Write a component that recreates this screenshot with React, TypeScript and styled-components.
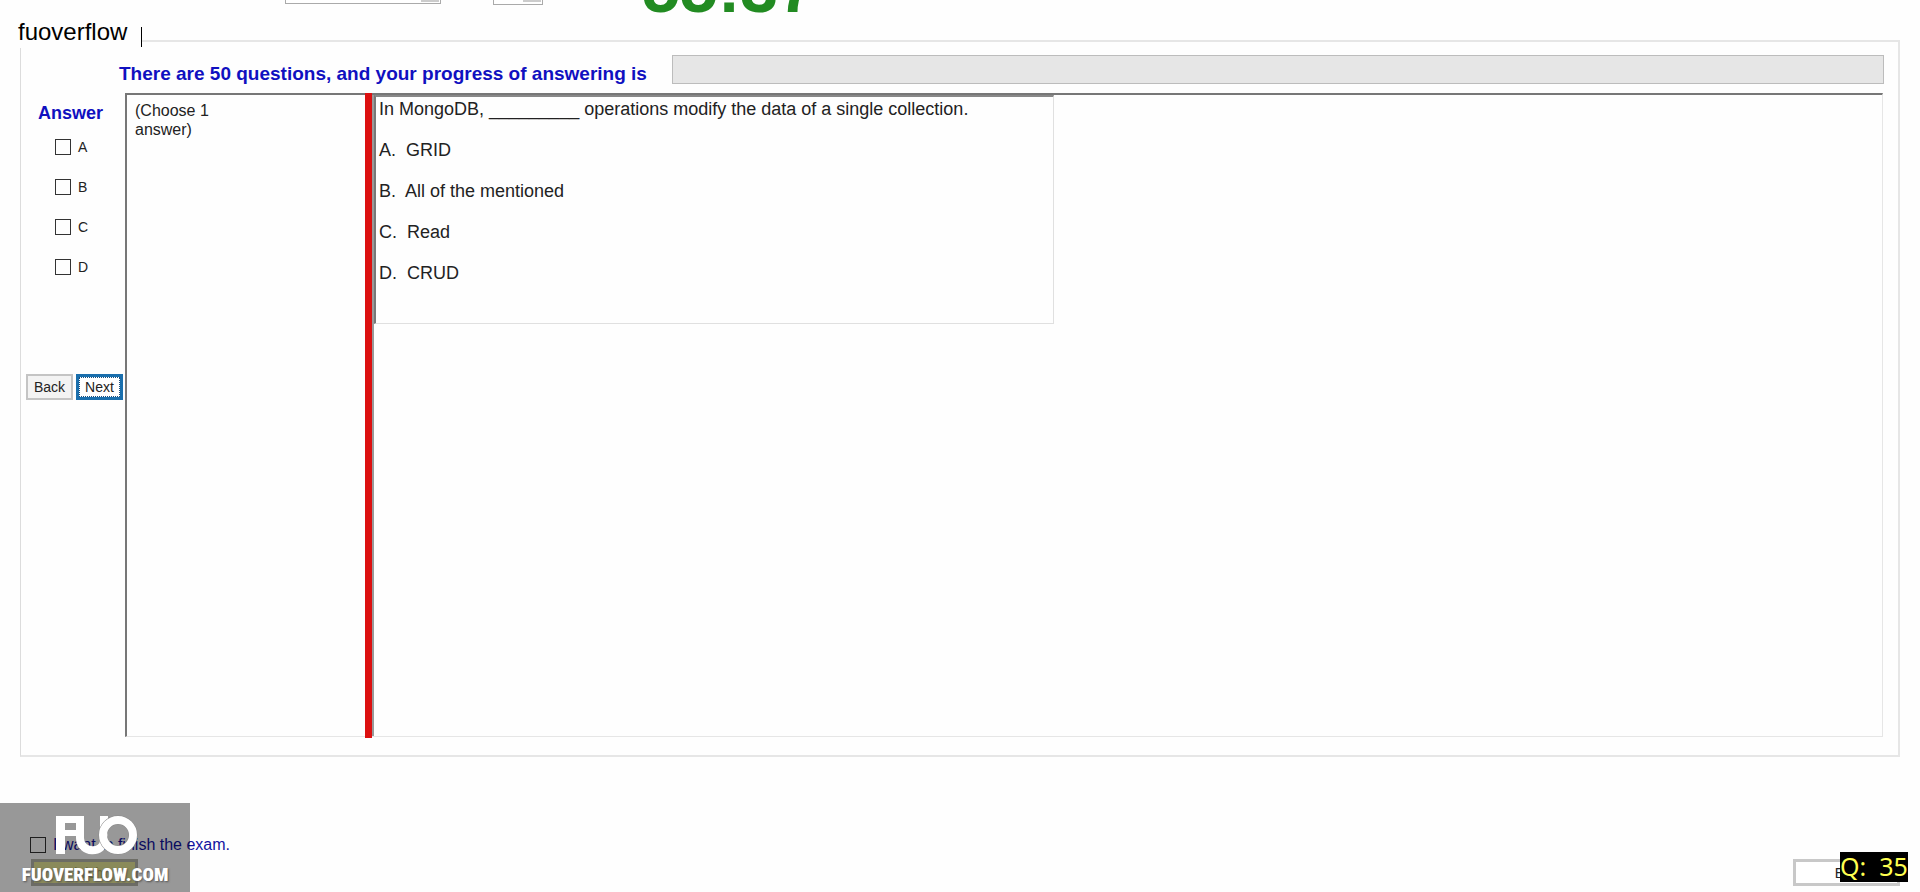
import React from 'react';
import styled, { createGlobalStyle } from 'styled-components';

const Global = createGlobalStyle`
  * { box-sizing: border-box; }
  body { margin: 0; background: #fefefe; color: #222; font-family: "Liberation Sans", Arial, sans-serif; }
  #root { min-height: 100vh; display: flex; }
`;

const Page = styled.div`
  flex: 1;
  min-width: 0;
  min-height: 100vh;
  position: relative;
  display: flex;
  flex-direction: column;
  overflow: hidden;
`;

const TopBar = styled.header`
  height: 40px;
  display: flex;
  align-items: flex-start;
  padding-left: 285px;
`;

const TopSelect = styled.select<{ $w: number; $h: number }>`
  width: ${p => p.$w}px;
  height: ${p => p.$h}px;
  flex: none;
  appearance: none;
  padding: 0;
  border: 1px solid #aaa;
  border-top: 0;
  border-radius: 0;
  background: linear-gradient(#ccc, #ccc) right 1px top 0 / 18px 2px no-repeat #fff;
  & + & { margin-left: 52px; }
`;

const Timer = styled.time`
  margin-left: 99px;
  height: 10px;
  display: flex;
  align-items: flex-end;
  font-size: 68px;
  line-height: 44px;
  font-weight: bold;
  color: #228b22;
`;

const Tag = styled.div`
  position: absolute;
  left: 10px;
  top: 16px;
  width: 132px;
  height: 32px;
  padding-left: 8px;
  background: #fefefe;
  color: #000;
  font-size: 24px;
  line-height: 32px;
  &::after { content: ""; position: absolute; right: 0; top: 11px; height: 20px; border-right: 1px solid #000; }
`;

const Panel = styled.main`
  flex: 1;
  margin: 0 20px;
  border: 2px solid #e6e6e6;
  border-left: 1px solid #dcdcdc;
  padding: 13px 14px 18px 5px;
  display: flex;
  flex-direction: column;
`;

const ProgressRow = styled.div`
  display: flex;
  align-items: flex-start;
  padding-left: 93px;
`;

const ProgressLabel = styled.label`
  min-width: 553px;
  padding-top: 4px;
  font-size: 19px;
  line-height: 30px;
  font-weight: bold;
  white-space: nowrap;
  color: #1010c0;
`;

const Progress = styled.progress`
  appearance: none;
  flex: 1;
  min-width: 0;
  height: 29px;
  border: 1px solid #bcbcbc;
  background: #e6e6e6;
  &::-webkit-progress-bar { background: #e6e6e6; }
`;

const Body = styled.div`
  flex: 1;
  display: flex;
  margin: 4px 1px 0 0;
`;

const AnswerColumn = styled.form`
  width: 99px;
  flex: none;
`;

const AnswerTitle = styled.h2`
  margin: 0 0 14px;
  padding: 10px 0 0 12px;
  font-size: 18px;
  line-height: 20px;
  color: #1010c0;
`;

const Choice = styled.label`
  display: flex;
  align-items: center;
  gap: 7px;
  height: 20px;
  margin: 0 0 20px 29px;
  font-size: 14px;
`;

const Check = styled.input`
  appearance: none;
  flex: none;
  width: 16px;
  height: 16px;
  margin: 0;
  border: 1px solid #333;
`;

const Buttons = styled.div`
  display: flex;
  gap: 3px;
  padding-top: 77px;
`;

const Button = styled.button<{ $focus?: boolean }>`
  width: 47px;
  height: 26px;
  padding: 0;
  font-family: inherit;
  font-size: 14px;
  color: #222;
  background: ${p => (p.$focus ? '#fff' : '#f3f3f3')};
  border: ${p => (p.$focus ? '3px solid #1a6fad' : '2px solid #c4c4c4')};
  outline: ${p => (p.$focus ? '1px dotted #1a4f7d' : 'none')};
  outline-offset: -4px;
`;

const Work = styled.div`
  flex: 1;
  min-width: 0;
  display: flex;
  border: 1px solid #e6e6e6;
  border-top: 2px solid #777;
  border-left: 2px solid #777;
`;

const Instruction = styled.p`
  flex: none;
  width: 238px;
  margin: 0;
  padding: 6px 140px 0 8px;
  font-size: 16px;
  line-height: 19px;
`;

const Splitter = styled.div`
  width: 7px;
  margin: -2px 0 -2px 0;
  background: #dc1010;
`;

const QuestionPane = styled.div`
  flex: 1;
  min-width: 0;
  border-left: 2px solid #999;
`;

const Question = styled.article`
  max-width: 680px;
  height: 229px;
  border: 1px solid #e0e0e0;
  border-top: 2px solid #888;
  border-left: 2px solid #777;
  padding: 2px 0 0 3px;
  font-size: 18px;
  line-height: 20px;
  p { margin: 0 0 21px; white-space: pre; }
`;

const Footer = styled.footer`
  height: 135px;
  flex: none;
  padding: 78px 20px 0 30px;
`;

const Finish = styled.label`
  display: flex;
  align-items: center;
  gap: 7px;
  height: 20px;
  font-size: 16px;
  color: #1212a0;
`;

const FooterButtons = styled.div`
  display: flex;
  justify-content: space-between;
  padding: 4px 0 0 1px;
`;

const FooterButton = styled(Button)<{ $olive?: boolean }>`
  width: 107px;
  height: 27px;
  border: 3px solid #c8c8c8;
  ${p => p.$olive && 'border-color: #b4b4a8; color: #a8a850;'}
  background: ${p => (p.$olive ? '#e6e696' : '#fff')};
`;

const Watermark = styled.div`
  position: absolute;
  left: 0;
  bottom: 0;
  width: 190px;
  height: 89px;
  background: rgba(0, 0, 0, 0.4);
  color: #fff;
  text-align: center;
  font: 900 19px/24px "Roboto Condensed", "Liberation Sans Narrow", "Open Sans Condensed", sans-serif;
  text-shadow: 1px 1px 2px #555;
  svg { display: block; margin: 12px 0 6px 54px; }
`;

const Counter = styled.output`
  position: absolute;
  right: 12px;
  bottom: 10px;
  width: 68px;
  height: 30px;
  background: #000;
  color: #ffff50;
  font: 25px/28px "Noto Sans", sans-serif;
  white-space: pre;
`;

const choices = ['A', 'B', 'C', 'D'];
const lines = ['In MongoDB, _________ operations modify the data of a single collection.', 'A.  GRID', 'B.  All of the mentioned', 'C.  Read', 'D.  CRUD'];

export default function App() {
  return (
    <Page>
      <Global />
      <TopBar>
        <TopSelect $w={156} $h={4} aria-label="Font" />
        <TopSelect $w={50} $h={5} aria-label="Size" />
        <Timer>55:37</Timer>
      </TopBar>
      <Panel>
        <ProgressRow>
          <ProgressLabel htmlFor="progress">There are 50 questions, and your progress of answering is</ProgressLabel>
          <Progress id="progress" value={0} max={50} />
        </ProgressRow>
        <Body>
          <AnswerColumn>
            <AnswerTitle>Answer</AnswerTitle>
            {choices.map(c => (
              <Choice key={c}><Check type="checkbox" />{c}</Choice>
            ))}
            <Buttons>
              <Button type="button">Back</Button>
              <Button type="button" $focus>Next</Button>
            </Buttons>
          </AnswerColumn>
          <Work>
            <Instruction>(Choose 1 answer)</Instruction>
            <Splitter />
            <QuestionPane>
              <Question>{lines.map(l => <p key={l}>{l}</p>)}</Question>
            </QuestionPane>
          </Work>
        </Body>
      </Panel>
      <Footer>
        <Finish><Check type="checkbox" />I want to finish the exam.</Finish>
        <FooterButtons>
          <FooterButton type="button" $olive>Finish</FooterButton>
          <FooterButton type="button">Exit</FooterButton>
        </FooterButtons>
      </Footer>
      <Tag>fuoverflow</Tag>
      <Watermark>
        <svg width="86" height="42" viewBox="0 0 86 42" fill="none">
          <path d="M2 1H22V8H11V15H22V21H11V39H2Z" fill="#fff" />
          <path d="M26 1V23C26 39 50 39 50 25V1" stroke="#fff" strokeWidth="8" />
          <circle cx="64" cy="20" r="15" stroke="#8a8a8a" strokeWidth="9" />
          <circle cx="64" cy="20" r="15" stroke="#fff" strokeWidth="8" />
        </svg>
        FUOVERFLOW.COM
      </Watermark>
      <Counter>Q:  35</Counter>
    </Page>
  );
}
